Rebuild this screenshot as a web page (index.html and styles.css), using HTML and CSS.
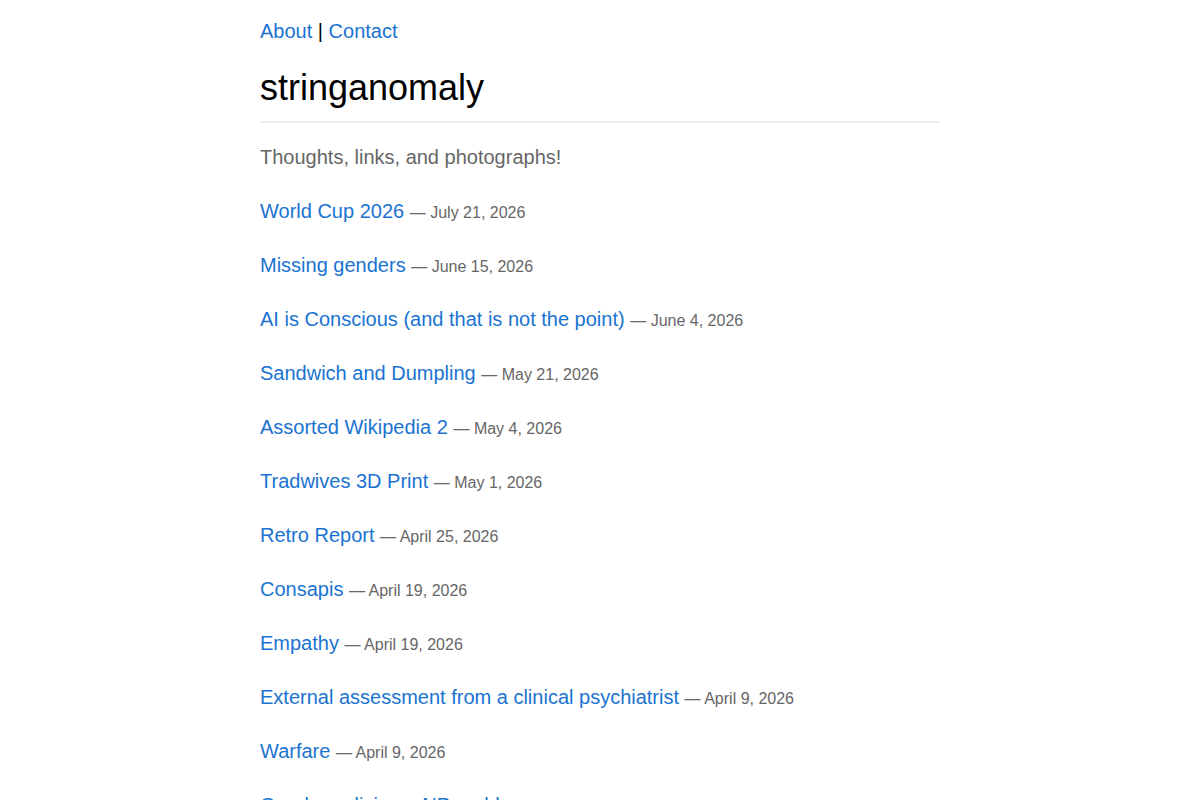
FILE: index.html
```html
<!DOCTYPE html>
<html lang="en">
<head>
    <meta charset="UTF-8">
    <meta name="viewport" content="width=device-width, initial-scale=1.0">
    <title>stringanomaly</title>
    <link rel="stylesheet" href="styles.css">
</head>
<body>
    <div class="container">
        <nav class="nav">
            <a href="#">About</a> | <a href="#">Contact</a>
        </nav>
        <h1 class="site-title">stringanomaly</h1>
        <p class="tagline">Thoughts, links, and photographs!</p>
        <ul class="posts">
            <li><a href="#">World Cup 2026</a> <span class="date">&mdash; July 21, 2026</span></li>
            <li><a href="#">Missing genders</a> <span class="date">&mdash; June 15, 2026</span></li>
            <li><a href="#">AI is Conscious (and that is not the point)</a> <span class="date">&mdash; June 4, 2026</span></li>
            <li><a href="#">Sandwich and Dumpling</a> <span class="date">&mdash; May 21, 2026</span></li>
            <li><a href="#">Assorted Wikipedia 2</a> <span class="date">&mdash; May 4, 2026</span></li>
            <li><a href="#">Tradwives 3D Print</a> <span class="date">&mdash; May 1, 2026</span></li>
            <li><a href="#">Retro Report</a> <span class="date">&mdash; April 25, 2026</span></li>
            <li><a href="#">Consapis</a> <span class="date">&mdash; April 19, 2026</span></li>
            <li><a href="#">Empathy</a> <span class="date">&mdash; April 19, 2026</span></li>
            <li><a href="#">External assessment from a clinical psychiatrist</a> <span class="date">&mdash; April 9, 2026</span></li>
            <li><a href="#">Warfare</a> <span class="date">&mdash; April 9, 2026</span></li>
            <li><a href="#">Gender policing a NP problem</a> <span class="date">&mdash; April 2, 2026</span></li>
        </ul>
    </div>
</body>
</html>
```

FILE: styles.css
```css
body {
    font-family: "Liberation Sans", Arial, sans-serif;
    margin: 0;
    padding: 0;
    background-color: #fff;
    color: #000;
}
.container {
    max-width: 680px;
    margin: 0 auto;
    padding-top: 16px;
}
a {
    color: #1a73d1;
    text-decoration: none;
}
.nav {
    font-size: 20px;
    line-height: 30px;
}
.site-title {
    font-size: 36px;
    font-weight: normal;
    line-height: 1.2;
    margin: 20px 0 19px;
    padding-bottom: 12px;
    border-bottom: 2px solid #eee;
}
.tagline {
    font-size: 20px;
    line-height: 30px;
    color: #666;
    margin: 0 0 24px;
}
.posts {
    list-style: none;
    margin: 0;
    padding: 0;
}
.posts li {
    font-size: 20px;
    line-height: 30px;
    margin-bottom: 24px;
}
.date {
    font-size: 16px;
    line-height: 16px;
    color: #666;
}
```
